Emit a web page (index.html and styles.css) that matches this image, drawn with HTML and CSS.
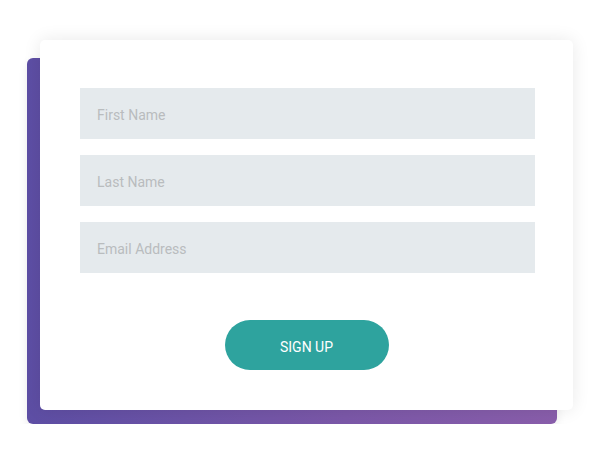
FILE: index.html
```html
<!DOCTYPE html>
<html lang="en">
<head>
<meta charset="utf-8">
<title>Sign up</title>
<link rel="stylesheet" href="styles.css">
</head>
<body>
<div class="stage">
  <div class="backdrop"></div>
  <form class="card">
    <div class="fields">
      <input class="field" type="text" placeholder="First Name">
      <input class="field" type="text" placeholder="Last Name">
      <input class="field" type="email" placeholder="Email Address">
    </div>
    <button class="btn" type="button">SIGN UP</button>
  </form>
</div>
</body>
</html>
```
FILE: styles.css
```css
html, body {
  margin: 0;
  padding: 0;
  background: #ffffff;
  font-family: Roboto, "Liberation Sans", sans-serif;
}
.stage {
  display: grid;
  width: 546px;
  margin: 40px 0 0 27px;
}
.backdrop {
  grid-area: 1 / 1;
  margin: 18px 16px 0 0;
  border-radius: 6px;
  background: linear-gradient(90deg, #5d4ea4 0%, #7b58a8 60%, #895eab 100%);
  box-shadow: 0 4px 10px rgba(0, 0, 0, 0.08);
}
.card {
  grid-area: 1 / 1;
  margin: 0 0 14px 13px;
  background: #ffffff;
  border-radius: 5px;
  box-shadow: 0 0 18px rgba(0, 0, 0, 0.09);
  padding: 48px 38px 40px 40px;
  display: flex;
  flex-direction: column;
  align-items: center;
  gap: 47px;
}
.fields {
  align-self: stretch;
  display: flex;
  flex-direction: column;
  gap: 16px;
}
.field {
  display: block;
  box-sizing: border-box;
  width: 100%;
  height: 51px;
  border: 0;
  margin: 0;
  padding: 2px 17px 0;
  background: #e5eaed;
  font-family: Roboto, "Liberation Sans", sans-serif;
  font-size: 14px;
  color: #333;
  outline: none;
}
.field::placeholder {
  color: #b9bcbe;
}
.btn {
  box-sizing: border-box;
  width: 164px;
  height: 50px;
  margin-right: 2px;
  padding: 3px 0 0;
  border: 0;
  border-radius: 25px;
  background: #2ea39e;
  color: #ffffff;
  font-family: Roboto, "Liberation Sans", sans-serif;
  font-size: 14px;
  font-weight: 400;
  cursor: pointer;
}
```
